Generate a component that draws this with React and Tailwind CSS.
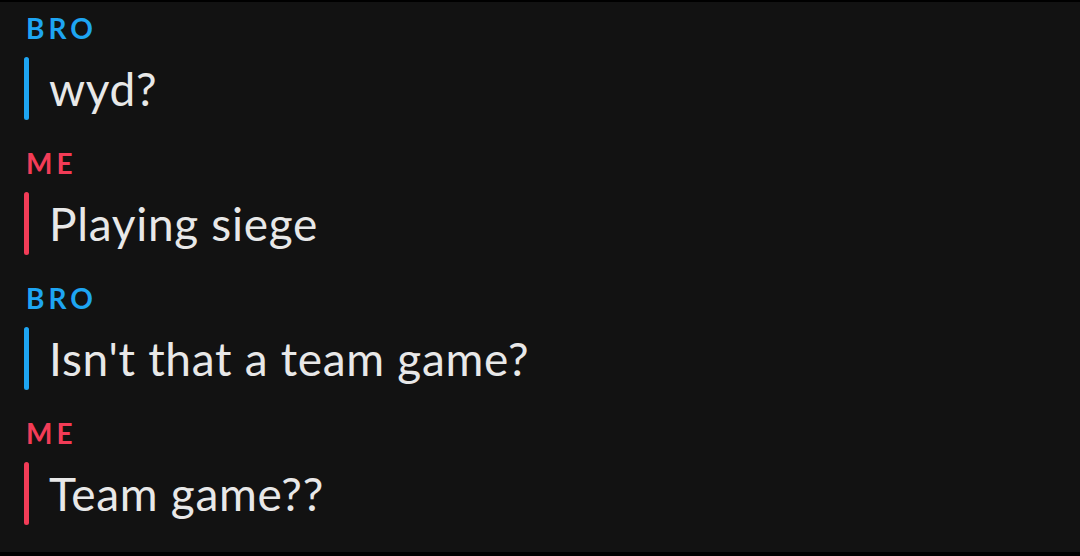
export default function App() {
  const msgs = [
    { who: "BRO", text: "wyd?", color: "text-[#1ea5f2]", bar: "bg-[#1ea5f2]" },
    { who: "ME", text: "Playing siege", color: "text-[#f23c57]", bar: "bg-[#f23c57]" },
    { who: "BRO", text: "Isn't that a team game?", color: "text-[#1ea5f2]", bar: "bg-[#1ea5f2]" },
    { who: "ME", text: "Team game??", color: "text-[#f23c57]", bar: "bg-[#f23c57]" },
  ];
  return (
    <div className="w-[1080px] h-[556px] bg-black overflow-hidden" style={{ fontFamily: "Lato, 'Noto Sans', sans-serif" }}>
      <div className="mt-[2px] h-[550px] bg-[#121212] pl-[24px] flex flex-col">
        {msgs.map((m, i) => (
          <div key={i} className="h-[135px] pt-[12px] flex flex-col">
            <div className={`${m.color} text-[28px] font-bold leading-none tracking-[4px] pl-[2px]`}>{m.who}</div>
            <div className="mt-[15px] h-[63px] flex items-center">
              <div className={`${m.bar} w-[5px] h-full rounded-full`} />
              <div className="ml-[20px] text-[46px] text-[#e8e8e8] leading-none tracking-[0.7px]">{m.text}</div>
            </div>
          </div>
        ))}
      </div>
    </div>
  );
}
